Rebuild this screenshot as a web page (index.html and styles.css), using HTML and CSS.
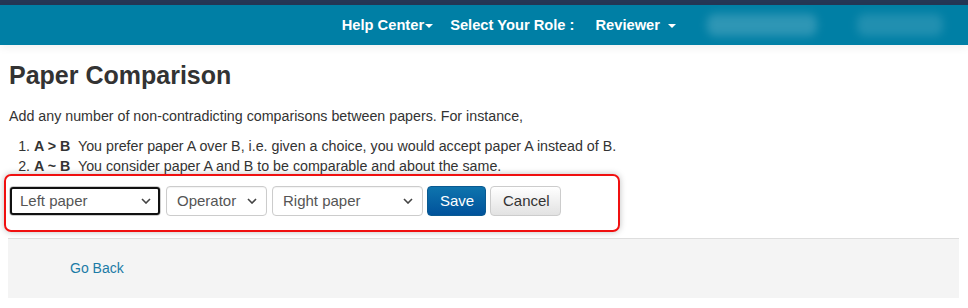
FILE: index.html
```html
<!DOCTYPE html>
<html lang="en">
<head>
  <meta charset="UTF-8">
  <title>Paper Comparison</title>
  <link rel="stylesheet" href="styles.css">
</head>
<body>
  <!-- Barra superior -->
  <div class="topbar"></div>
  <nav class="navbar">
    <a class="nav-item first" href="#">Help Center<span class="caret tight"></span></a>
    <span class="nav-item">Select Your Role :</span>
    <a class="nav-item" href="#">Reviewer<span class="caret"></span></a>
    <span class="blurred wide"></span>
    <span class="blurred"></span>
  </nav>

  <div class="content">
    <h3 class="title">Paper Comparison</h3>
    <p>Add any number of non-contradicting comparisons between papers. For instance,</p>
    <ol class="rules">
      <li><b>A &gt; B</b>&nbsp; You prefer paper A over B, i.e. given a choice, you would accept paper A instead of B.</li>
      <li><b>A ~ B</b>&nbsp; You consider paper A and B to be comparable and about the same.</li>
    </ol>

    <form class="compare-form" onsubmit="event.preventDefault()">
      <select class="field focused">
        <option>Left paper</option>
      </select>
      <select class="field small">
        <option>Operator</option>
      </select>
      <select class="field right">
        <option>Right paper</option>
      </select>
      <button type="submit" class="btn btn-primary">Save</button>
      <button type="button" class="btn btn-default">Cancel</button>
    </form>
  </div>

  <div class="footer">
    <a href="#">Go Back</a>
  </div>
</body>
</html>
```

FILE: styles.css
```css
body {
  margin: 0;
  font-family: "Liberation Sans", Arial, sans-serif;
  font-size: 14.25px;
  line-height: 20px;
  color: #333;
  background: #fff;
}
.topbar {
  height: 5px;
  background: #253755;
}
.navbar {
  height: 40px;
  background: #007fa5;
  display: flex;
  align-items: center;
  justify-content: flex-end;
  padding-right: 25px;
  box-shadow: 0 3px 8px rgba(0, 0, 0, 0.06);
}
.nav-item {
  color: #fff;
  font-size: 14.7px;
  font-weight: bold;
  text-decoration: none;
  margin-right: 21px;
  display: flex;
  align-items: center;
}
.nav-item.first {
  margin-right: 17px;
}
.caret {
  width: 0;
  height: 0;
  border-left: 4px solid transparent;
  border-right: 4px solid transparent;
  border-top: 4px solid #fff;
  margin-left: 8px;
  margin-top: 1px;
}
.caret.tight {
  margin-left: 1px;
}
.blurred {
  width: 86px;
  height: 22px;
  background: rgba(255, 255, 255, 0.13);
  border-radius: 8px;
  filter: blur(4px);
  margin-left: 40px;
}
.blurred.wide {
  width: 110px;
  background: rgba(255, 255, 255, 0.18);
  margin-left: 10px;
}
.content {
  padding: 0 9px;
}
.title {
  font-size: 25px;
  font-weight: bold;
  line-height: 1.1;
  margin: 17px 0 16px;
}
p {
  margin: 0 0 10px;
}
.rules {
  margin: 0;
  padding-left: 25px;
}
.compare-form {
  display: flex;
  align-items: center;
  gap: 5px;
  margin: -2px 0 0 -5px;
  width: 605px;
  padding: 10px 4px 14px 3px;
  border: 2px solid #f01010;
  border-radius: 7px;
  box-shadow: 0 0 6px rgba(0, 0, 0, 0.25);
}
.field {
  -webkit-appearance: none;
  appearance: none;
  height: 30px;
  width: 152px;
  padding: 0 24px 0 10px;
  font-family: "Liberation Sans", Arial, sans-serif;
  font-size: 15px;
  color: #555;
  background: #fff url("data:image/svg+xml;utf8,<svg xmlns='http://www.w3.org/2000/svg' width='10' height='6'><path d='M1 1l4 4 4-4' fill='none' stroke='%23444' stroke-width='1.6'/></svg>") no-repeat right 9px center;
  border: 1px solid #ccc;
  border-radius: 4px;
  box-shadow: inset 0 1px 1px rgba(0, 0, 0, 0.05);
}
.field.small {
  width: 101px;
}
.field.right {
  width: 151px;
}
.field.focused {
  outline: 2px solid #111;
  outline-offset: -3px;
}
.btn {
  height: 30px;
  padding: 0 12px;
  font-family: "Liberation Sans", Arial, sans-serif;
  font-size: 15px;
  border-radius: 4px;
  cursor: pointer;
}
.btn-primary {
  color: #fff;
  width: 59px;
  margin-left: -1px;
  background: linear-gradient(#0e74ad, #00529b);
  border: 1px solid #0a5a91;
}
.btn-default {
  color: #333;
  width: 71px;
  margin-left: -1px;
  background: linear-gradient(#fff, #e2e2e2);
  border: 1px solid #ccc;
}
.footer {
  margin: 6px 9px 0 8px;
  height: 59px;
  background: #f4f4f4;
  border-top: 1px solid #dedede;
  padding-left: 62px;
  display: flex;
  align-items: center;
}
.footer a {
  color: #1b7ba6;
  font-size: 14px;
  text-decoration: none;
}
```
